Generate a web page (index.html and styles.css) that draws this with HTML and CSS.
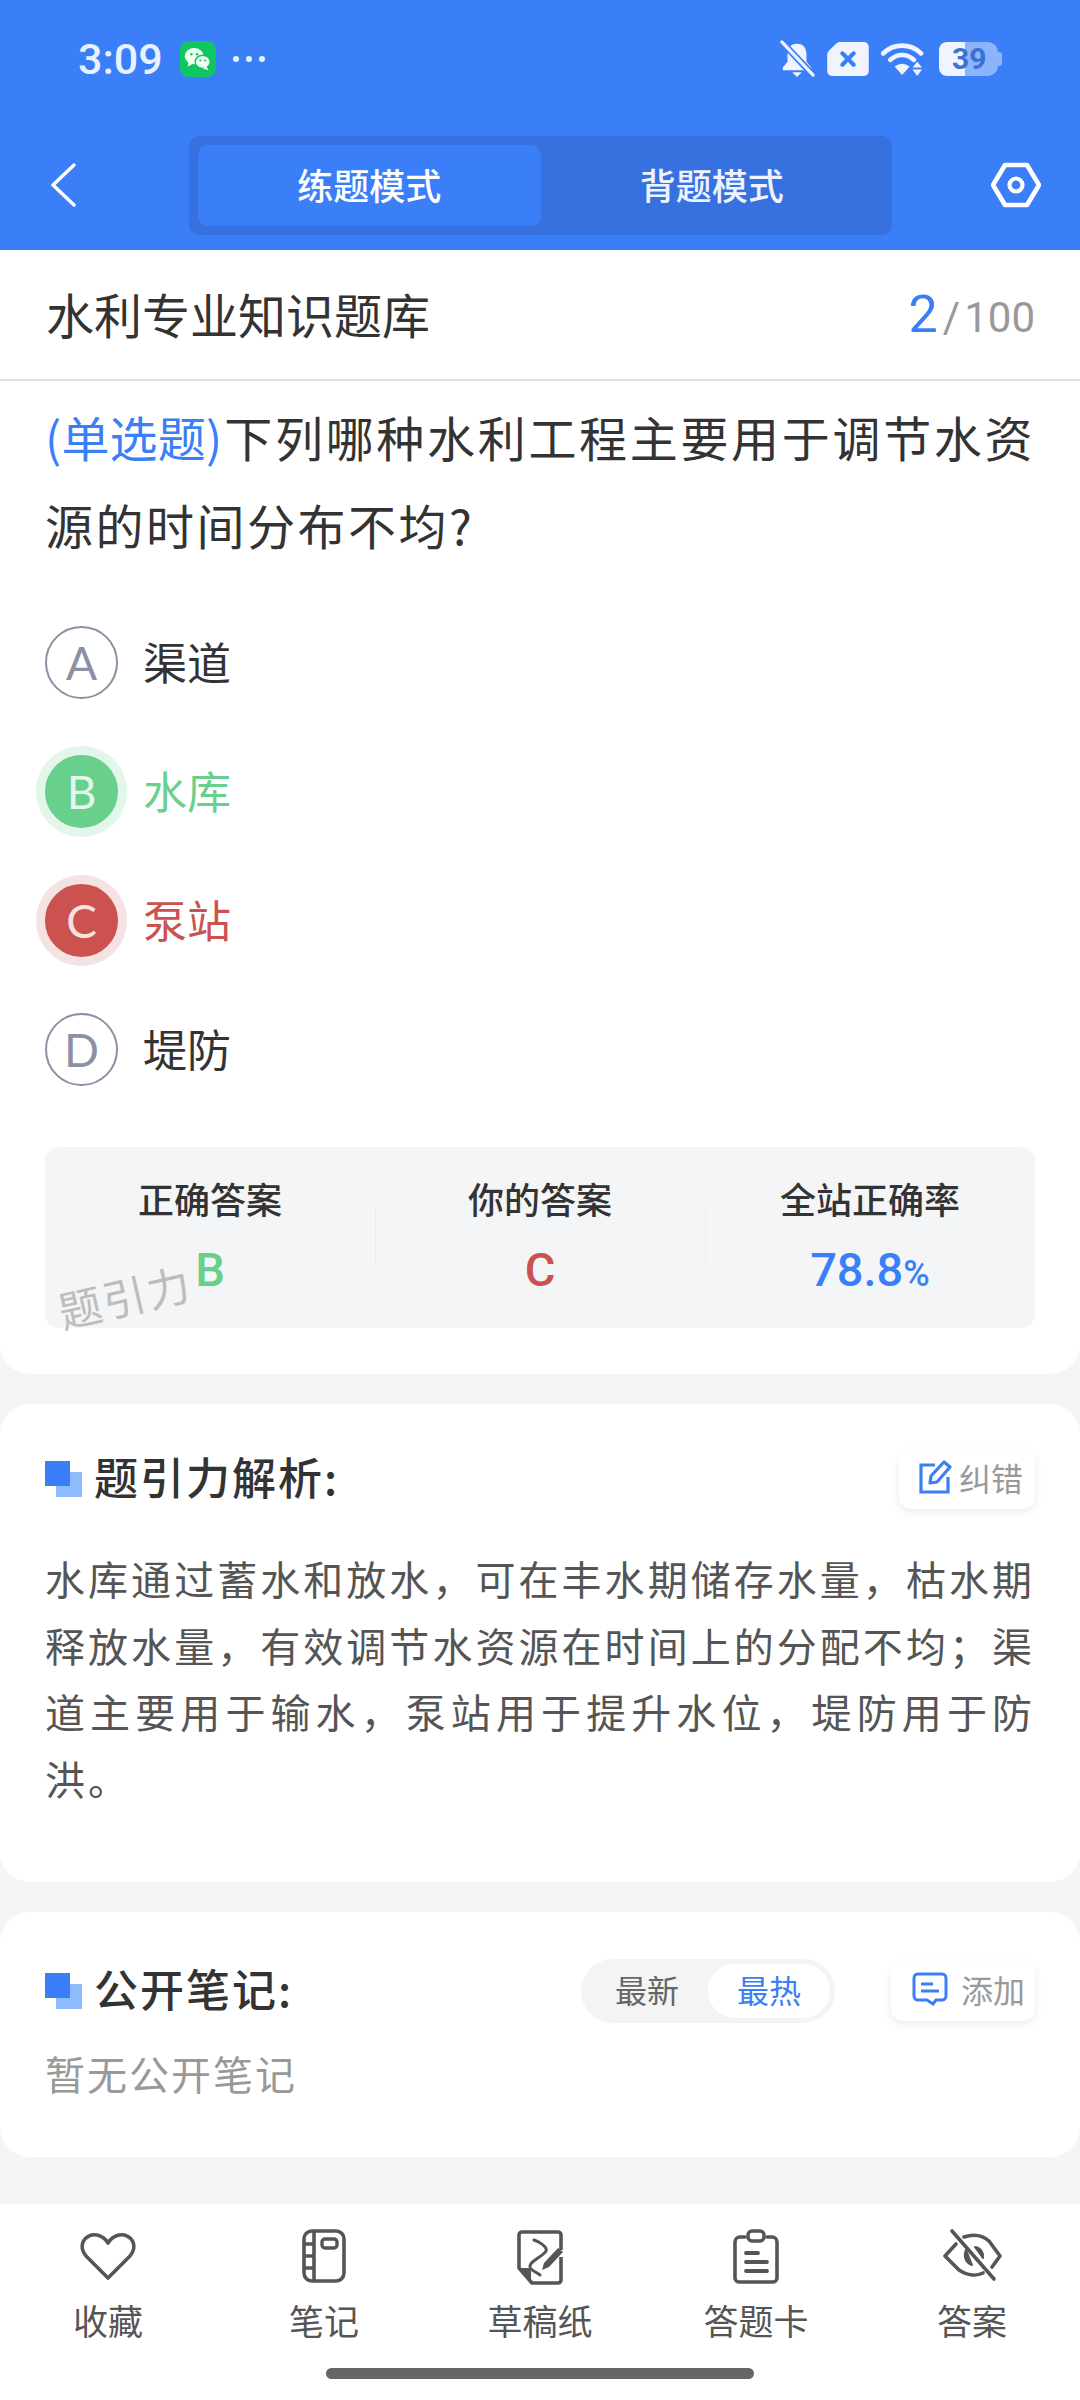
FILE: index.html
```html
<!DOCTYPE html>
<html lang="zh-CN">
<head>
    <meta charset="UTF-8">
    <meta name="viewport" content="width=device-width, initial-scale=1.0">
    <title>水利专业知识题库</title>
    <link rel="stylesheet" href="styles.css">
</head>
<body>

<div class="app">
    <header class="top">
        <div class="status-bar">
            <div class="status-left">
                <span class="clock">3:09</span>
                <svg class="wechat" width="36" height="36" viewBox="0 0 38 38">
                    <rect width="38" height="38" rx="9" fill="#0fc65f"/>
                    <ellipse cx="15" cy="16" rx="10" ry="8.5" fill="#f2fff7"/>
                    <path d="M9 22l-1 5 6-3z" fill="#f2fff7"/>
                    <ellipse cx="24" cy="22" rx="8" ry="7" fill="#f2fff7" stroke="#0fc65f" stroke-width="1.5"/>
                    <path d="M28 27l2 4-6-2z" fill="#f2fff7"/>
                    <circle cx="12" cy="14" r="1.3" fill="#0fc65f"/>
                    <circle cx="18" cy="14" r="1.3" fill="#0fc65f"/>
                    <circle cx="21.5" cy="20.5" r="1.1" fill="#0fc65f"/>
                    <circle cx="26.5" cy="20.5" r="1.1" fill="#0fc65f"/>
                </svg>
                <span class="dots"><i></i><i></i><i></i></span>
            </div>
            <div class="status-right">
                <svg width="36" height="38" viewBox="0 0 38 40">
                    <path d="M19 4c-7 0-10 5-10 11v8l-5 6v3h30v-3l-5-6v-8c0-6-3-11-10-11z" fill="#f0f4ff"/>
                    <path d="M14 34h10l-5 5z" fill="#f0f4ff"/>
                    <path d="M2 1l34 36" stroke="#3b7ff8" stroke-width="7"/>
                    <path d="M3 2l33 35" stroke="#f0f4ff" stroke-width="3.4" stroke-linecap="round"/>
                </svg>
                <svg width="42" height="34" viewBox="0 0 44 36">
                    <path d="M13 0h26a5 5 0 0 1 5 5v26a5 5 0 0 1-5 5H5a5 5 0 0 1-5-5V13q0-2 2-4l7-7q2-2 4-2z" fill="#f0f4ff"/>
                    <path d="M16 12l12 12M28 12L16 24" stroke="#3b7ff8" stroke-width="4.4" stroke-linecap="round"/>
                </svg>
                <svg width="46" height="34" viewBox="0 0 48 36">
                    <path d="M2 12c11-11 29-11 40 0" fill="none" stroke="#f0f4ff" stroke-width="5" stroke-linecap="round"/>
                    <path d="M9.500 19c7-7 18-7 25 0" fill="none" stroke="#f0f4ff" stroke-width="5" stroke-linecap="round"/>
                    <path d="M14 26q8-6 16 0l-8 9z" fill="#f0f4ff"/>
                    <path d="M38 21l5 6H33zM38 36l5-7H33z" fill="#f0f4ff"/>
                </svg>
                <div class="battery">
                    <span class="battery-num">39</span>
                </div>
            </div>
        </div>
        <nav class="mode-bar">
            <svg class="back" width="30" height="44" viewBox="0 0 30 44">
                <path d="M24 2L3 22l21 20" fill="none" stroke="#fff" stroke-width="3.4" stroke-linecap="round" stroke-linejoin="round"/>
            </svg>
            <div class="mode-tabs">
                <div class="mode-tab active">练题模式</div>
                <div class="mode-tab">背题模式</div>
            </div>
            <svg class="setting" width="50" height="46" viewBox="0 0 50 46">
                <path d="M14 3h22l12 20-12 20H14L2 23z" fill="none" stroke="#fff" stroke-width="4.6" stroke-linejoin="round"/>
                <circle cx="25" cy="23" r="6.500" fill="none" stroke="#fff" stroke-width="4.200"/>
            </svg>
        </nav>
    </header>

    <main class="content">
        <section class="card question-card">
            <div class="bank-row">
                <span class="bank-name">水利专业知识题库</span>
                <span class="progress"><b>2</b><em>/</em>100</span>
            </div>
            <div class="question-body">
                <p class="question"><span class="q-type">(单选题)</span>下列哪种水利工程主要用于调节水资源的时间分布不均?</p>
                <ul class="options">
                    <li class="option"><span class="letter">A</span>渠道</li>
                    <li class="option right"><span class="letter">B</span>水库</li>
                    <li class="option wrong"><span class="letter">C</span>泵站</li>
                    <li class="option"><span class="letter">D</span>堤防</li>
                </ul>
                <div class="stats">
                    <div class="stat">
                        <div class="stat-label">正确答案</div>
                        <div class="stat-value green">B</div>
                    </div>
                    <div class="stat">
                        <div class="stat-label">你的答案</div>
                        <div class="stat-value red">C</div>
                    </div>
                    <div class="stat">
                        <div class="stat-label">全站正确率</div>
                        <div class="stat-value blue">78.8<small>%</small></div>
                    </div>
                    <span class="watermark">题引力</span>
                </div>
            </div>
        </section>

        <section class="card analysis-card">
            <div class="section-head">
                <h3 class="section-title">题引力解析:</h3>
                <div class="tool-btn">
                    <svg width="34" height="34" viewBox="0 0 34 34">
                        <path d="M17 5H3v27h27V17" fill="none" stroke="#3b7ff8" stroke-width="3.200"/>
                        <path d="M12 23l1-7L26 2l6 5-13 15z" fill="none" stroke="#3b7ff8" stroke-width="3.200" stroke-linejoin="round"/>
                    </svg>
                    纠错
                </div>
            </div>
            <p class="analysis-text">水库通过蓄水和放水，可在丰水期储存水量，枯水期释放水量，有效调节水资源在时间上的分配不均；渠道主要用于输水，泵站用于提升水位，堤防用于防洪。</p>
        </section>

        <section class="card notes-card">
            <div class="section-head">
                <h3 class="section-title">公开笔记:</h3>
                <div class="sort-toggle">
                    <span class="sort-item">最新</span>
                    <span class="sort-item active">最热</span>
                </div>
                <div class="tool-btn">
                    <svg width="36" height="34" viewBox="0 0 36 34">
                        <path d="M6 2h24a4 4 0 0 1 4 4v18a4 4 0 0 1-4 4h-6l-3 4-6-4H6a4 4 0 0 1-4-4V6a4 4 0 0 1 4-4z" fill="none" stroke="#3b7ff8" stroke-width="3"/>
                        <path d="M9 12h12M9 19h18" stroke="#3b7ff8" stroke-width="3"/>
                    </svg>
                    添加
                </div>
            </div>
            <p class="empty-note">暂无公开笔记</p>
        </section>
    </main>

    <footer class="bottom-nav">
        <div class="nav-items">
            <div class="nav-item">
                <svg width="60" height="60" viewBox="0 0 60 60">
                    <path d="M30 52L8 30c-4-5-5-9-3-14 3-6 9-8 14-7 5 1 8 3 11 8 3-5 6-7 11-8 5-1 11 1 14 7 2 5 1 9-3 14z" fill="none" stroke="#555" stroke-width="3.600" stroke-linejoin="round"/>
                </svg>
                <span>收藏</span>
            </div>
            <div class="nav-item">
                <svg width="60" height="60" viewBox="0 0 60 60">
                    <rect x="10" y="5" width="40" height="50" rx="8" fill="none" stroke="#555" stroke-width="3.600"/>
                    <path d="M20 5v50M10 18h10M10 30h10M10 42h10" stroke="#555" stroke-width="3.600"/>
                    <rect x="28" y="13" width="15" height="9" rx="3" fill="none" stroke="#555" stroke-width="3.400"/>
                </svg>
                <span>笔记</span>
            </div>
            <div class="nav-item">
                <svg width="60" height="60" viewBox="0 0 60 60">
                    <path d="M51 24V9a3 3 0 0 0-3-3H12a3 3 0 0 0-3 3v33l13 15h26a3 3 0 0 0 3-3V31" fill="none" stroke="#555" stroke-width="3.600" stroke-linejoin="round"/>
                    <path d="M9 42h8a4 4 0 0 1 4 4v10z" fill="#555"/>
                    <path d="M24 14c4 1 14 7 12 11-2 5-17 10-16 16 0 3 6 5 10 8" fill="none" stroke="#555" stroke-width="3" stroke-linecap="round"/>
                    <path d="M34 37l-2 7 7-3 14-15-5-4z" fill="#555"/>
                </svg>
                <span>草稿纸</span>
            </div>
            <div class="nav-item">
                <svg width="60" height="60" viewBox="0 0 60 60">
                    <path d="M19 11h-5a5 5 0 0 0-5 5v36a4 4 0 0 0 4 4h34a4 4 0 0 0 4-4V16a5 5 0 0 0-5-5h-5" fill="none" stroke="#555" stroke-width="3.600" stroke-linecap="round"/>
                    <rect x="22" y="5" width="16" height="10" rx="4" fill="none" stroke="#555" stroke-width="3.400"/>
                    <path d="M20 27h12M20 36h21M20 45h21" stroke="#555" stroke-width="3.800" stroke-linecap="round"/>
                </svg>
                <span>答题卡</span>
            </div>
            <div class="nav-item">
                <svg width="60" height="60" viewBox="0 0 60 60">
                    <path d="M14 18L3 30l14 14c9 6 18 6 24 3M22 11c9-3 18-2 25 4l11 15-8 11" fill="none" stroke="#555" stroke-width="3.600" stroke-linecap="round" stroke-linejoin="round"/>
                    <path d="M24 24c-3 7 0 13 6 15l-6-15zM33 21c6 1 9 6 8 11z" fill="#555" stroke="#555" stroke-width="2" stroke-linejoin="round"/>
                    <path d="M10 5l42 48" stroke="#555" stroke-width="3.600" stroke-linecap="round"/>
                </svg>
                <span>答案</span>
            </div>
        </div>
        <div class="home-bar"></div>
    </footer>
</div>

</body>
</html>
```

FILE: styles.css
```css
:root {
    --primary-color: #3b7ff8;
    --bg-color: #f4f5f7;
    --text-color: #333333;
    --green: #69cf8c;
    --red: #cb524f;
    --font-family: 'Noto Sans CJK SC', 'Roboto', sans-serif;
}

*, *::before, *::after {
    box-sizing: border-box;
    margin: 0;
    padding: 0;
}

body {
    width: 1080px;
    height: 2400px;
    overflow: hidden;
    font-family: 'Roboto', 'Noto Sans CJK SC', sans-serif;
    background-color: var(--bg-color);
    color: var(--text-color);
}

.app {
    height: 2400px;
    display: flex;
    flex-direction: column;
}

/* Header */
.top {
    height: 250px;
    background: var(--primary-color);
    display: flex;
    flex-direction: column;
}

.status-bar {
    height: 116px;
    padding: 2px 78px 0 78px;
    display: flex;
    align-items: center;
    justify-content: space-between;
}

.status-left,
.status-right {
    display: flex;
    align-items: center;
}

.clock {
    font-size: 43px;
    font-weight: 500;
    color: #e9f0ff;
    line-height: 1;
}

.wechat {
    margin-left: 17px;
}

.dots {
    display: flex;
    gap: 7px;
    margin-left: 17px;
}

.dots i {
    width: 6px;
    height: 6px;
    border-radius: 50%;
    background: #e9f0ff;
}

.status-right {
    gap: 12px;
}

.battery {
    position: relative;
    width: 59px;
    height: 34px;
    margin-right: 4px;
    border-radius: 8px 10px 10px 8px;
    background: linear-gradient(90deg, #f0f4ff 26px, #8cb4fb 26px);
}

.battery::after {
    content: "";
    position: absolute;
    right: -4px;
    top: 10px;
    width: 4px;
    height: 14px;
    border-radius: 0 3px 3px 0;
    background: #8cb4fb;
}

.battery-num {
    position: absolute;
    left: 13px;
    top: 0;
    font-size: 30px;
    line-height: 34px;
    font-weight: 700;
    color: #3a70d8;
}

.mode-bar {
    flex: 1;
    padding: 20px 0 15px 50px;
    display: flex;
    align-items: flex-start;
}

.back {
    margin-top: 27px;
}

.mode-tabs {
    width: 703px;
    height: 99px;
    margin-left: 109px;
    padding: 9px;
    background: #3671df;
    border-radius: 10px;
    display: flex;
    flex-shrink: 0;
}

.mode-tab {
    width: 343px;
    padding-bottom: 4px;
    border-radius: 10px;
    font-family: var(--font-family);
    font-size: 36px;
    font-weight: 500;
    color: #eef3ff;
    display: flex;
    align-items: center;
    justify-content: center;
}

.mode-tab.active {
    background: var(--primary-color);
    color: #fff;
}

.setting {
    margin-left: 99px;
    margin-top: 26px;
}

/* Cards */
.content {
    flex: 1;
    display: flex;
    flex-direction: column;
    gap: 30px;
    font-family: var(--font-family);
}

.card {
    background: #fff;
    border-radius: 30px;
}

.question-card {
    border-radius: 0 0 30px 30px;
    height: 1124px;
}

.bank-row {
    height: 131px;
    padding: 0 45px 0 46px;
    border-bottom: 2px solid #e2e2e2;
    display: flex;
    align-items: center;
    justify-content: space-between;
}

.bank-name {
    margin-bottom: 4px;
    font-size: 48px;
    color: var(--text-color);
}

.progress {
    font-family: 'Roboto', sans-serif;
    font-size: 42px;
    color: #999;
    display: flex;
    align-items: baseline;
}

.progress b {
    font-size: 52px;
    font-weight: 400;
    color: var(--primary-color);
}

.progress em {
    font-style: normal;
    margin: 0 4px 0 5px;
}

.question-body {
    padding: 11px 45px 0;
}

.question {
    font-size: 48px;
    line-height: 88px;
    letter-spacing: 2.500px;
    text-align: justify;
}

.q-type {
    color: var(--primary-color);
    letter-spacing: 0;
    margin-right: 2px;
}

.options {
    list-style: none;
    margin-top: 30px;
}

.option {
    height: 129px;
    padding-bottom: 4px;
    display: flex;
    align-items: center;
    font-size: 44px;
}

.letter {
    width: 73px;
    height: 73px;
    margin-top: 4px;
    margin-right: 25px;
    border: 2px solid #8b90a3;
    border-radius: 50%;
    font-family: 'Lato', sans-serif;
    font-size: 46px;
    color: #8b90a3;
    display: flex;
    align-items: center;
    justify-content: center;
}

.option.right {
    color: var(--green);
}

.option.right .letter {
    background: var(--green);
    border-color: var(--green);
    color: #e4f7ea;
    box-shadow: 0 0 0 9px #e2f6ea;
}

.option.wrong {
    color: var(--red);
}

.option.wrong .letter {
    background: var(--red);
    border-color: var(--red);
    color: #f6e1e1;
    box-shadow: 0 0 0 9px #f5e2e2;
}

.stats {
    position: relative;
    height: 181px;
    margin-top: 33px;
    padding-top: 28px;
    background: var(--bg-color);
    border-radius: 14px;
    display: flex;
}

.stat {
    flex: 1;
    height: 90px;
    text-align: center;
}

.stat + .stat {
    background: linear-gradient(#ecedef, #ecedef) left 32px / 1px 60px no-repeat;
}

.stat-label {
    font-size: 36px;
    font-weight: 500;
    line-height: 46px;
}

.stat-value {
    margin-top: 19px;
    font-family: 'Roboto', sans-serif;
    font-size: 47px;
    font-weight: 500;
    line-height: 60px;
}

.stat-value small {
    font-size: 36px;
}

.green { color: var(--green); }
.red { color: var(--red); }
.blue { color: var(--primary-color); }

.watermark {
    position: absolute;
    left: 12px;
    bottom: 2px;
    font-size: 43px;
    color: #bdbdbd;
    letter-spacing: 2px;
    transform: rotate(-13deg);
}

/* Analysis & notes */
.analysis-card {
    height: 478px;
    padding: 44px 45px 0;
}

.notes-card {
    height: 245px;
    padding: 48px 45px 0;
}

.section-head {
    height: 61px;
    display: flex;
    align-items: center;
}

.section-title {
    flex: 1;
    height: 61px;
    padding-left: 49px;
    font-size: 44px;
    font-weight: 500;
    letter-spacing: 2px;
    line-height: 57px;
    background:
        linear-gradient(#3b7ff8, #3b7ff8) 0 13px / 25px 25px no-repeat,
        linear-gradient(#8fbafc, #8fbafc) 11px 24px / 26px 25px no-repeat;
}

.tool-btn {
    height: 60px;
    padding: 0 12px 3px 19px;
    border-radius: 12px;
    background: #fff;
    box-shadow: 0 3px 8px rgba(0, 0, 0, 0.08);
    font-size: 32px;
    color: #999;
    display: flex;
    align-items: center;
    gap: 7px;
}

.notes-card .tool-btn {
    padding-left: 21px;
    padding-right: 10px;
    gap: 13px;
}

.analysis-text {
    margin-top: 36px;
    font-size: 40px;
    line-height: 66.700px;
    letter-spacing: 3px;
    text-align: justify;
    color: #555;
}

.sort-toggle {
    width: 254px;
    height: 64px;
    margin-right: 56px;
    padding: 5px;
    border-radius: 32px;
    background: #f4f4f4;
    display: flex;
}

.sort-item {
    flex: 1;
    padding-bottom: 4px;
    border-radius: 27px;
    font-size: 32px;
    color: #666;
    display: flex;
    align-items: center;
    justify-content: center;
}

.sort-item.active {
    flex: none;
    width: 122px;
    background: #fff;
    color: var(--primary-color);
}

.empty-note {
    margin-top: 23px;
    font-size: 40px;
    letter-spacing: 2px;
    color: #999;
}

/* Bottom nav */
.bottom-nav {
    height: 196px;
    background: #fff;
    font-family: var(--font-family);
}

.nav-items {
    display: flex;
    padding-top: 22px;
}

.nav-item {
    flex: 1;
    display: flex;
    flex-direction: column;
    align-items: center;
    font-size: 35px;
    color: #555;
}

.nav-item span {
    margin-top: 9px;
    line-height: 50px;
}

.home-bar {
    width: 428px;
    height: 11px;
    margin: 23px auto 0;
    border-radius: 6px;
    background: #666;
}
```
